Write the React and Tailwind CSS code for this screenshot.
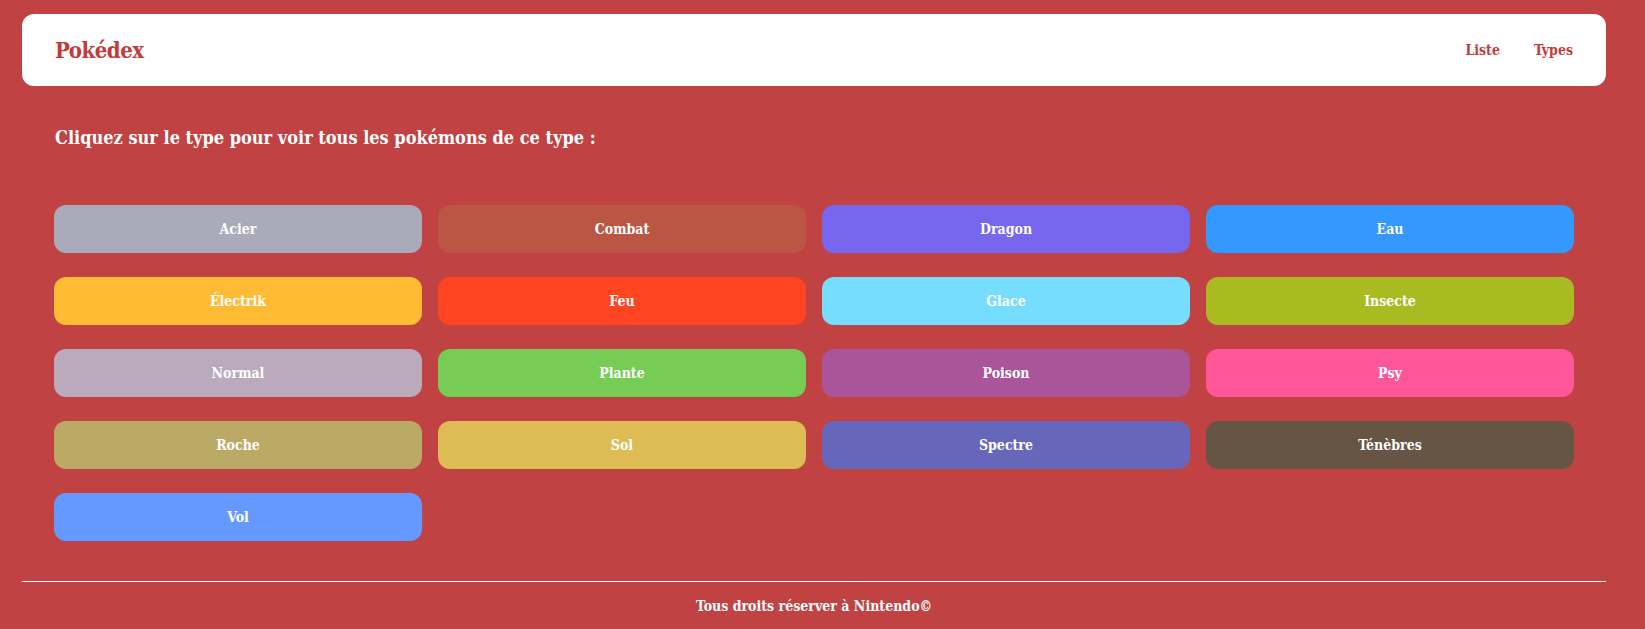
const types = [
  { name: 'Acier', color: 'bg-[#aaaabb]' },
  { name: 'Combat', color: 'bg-[#bb5544]' },
  { name: 'Dragon', color: 'bg-[#7766ee]' },
  { name: 'Eau', color: 'bg-[#3399ff]' },
  { name: 'Électrik', color: 'bg-[#ffbb33]' },
  { name: 'Feu', color: 'bg-[#ff4422]' },
  { name: 'Glace', color: 'bg-[#77ddff]' },
  { name: 'Insecte', color: 'bg-[#aabb22]' },
  { name: 'Normal', color: 'bg-[#bbaabb]' },
  { name: 'Plante', color: 'bg-[#77cc55]' },
  { name: 'Poison', color: 'bg-[#aa5599]' },
  { name: 'Psy', color: 'bg-[#ff5599]' },
  { name: 'Roche', color: 'bg-[#bbaa66]' },
  { name: 'Sol', color: 'bg-[#ddbb55]' },
  { name: 'Spectre', color: 'bg-[#6666bb]' },
  { name: 'Ténèbres', color: 'bg-[#665544]' },
  { name: 'Vol', color: 'bg-[#6699ff]' },
]

export default function App() {
  return (
    <div className="min-h-screen bg-[#c04242] pt-[14px] pl-[22px] pr-[39px] font-['DejaVu_Serif',serif] [font-stretch:condensed]">
      <header className="flex h-[72px] items-center justify-between rounded-[12px] bg-white px-[33px]">
        <a href="#" className="text-[22px] font-bold tracking-[-0.5px] text-[#c23b3b]">
          Pokédex
        </a>
        <nav className="flex items-center gap-[34px] text-[14px] font-bold text-[#c23b3b]">
          <a href="#">Liste</a>
          <a href="#">Types</a>
        </nav>
      </header>

      <main>
        <h2 className="mt-[38px] ml-[33px] text-[18px] leading-[28px] font-bold text-white">
          Cliquez sur le type pour voir tous les pokémons de ce type :
        </h2>

        <div className="mt-[53px] grid grid-cols-4 gap-x-4 gap-y-6 px-[32px]">
          {types.map((t) => (
            <button
              key={t.name}
              className={`flex h-[48px] items-center justify-center rounded-[12px] text-[14px] font-bold text-white ${t.color}`}
            >
              {t.name}
            </button>
          ))}
        </div>
      </main>

      <footer className="mt-[40px]">
        <hr className="border-0 border-t border-white" />
        <p className="mt-[14px] pb-[10px] text-center text-[14px] leading-[20px] font-bold text-white">
          Tous droits réserver à Nintendo©
        </p>
      </footer>
    </div>
  )
}
